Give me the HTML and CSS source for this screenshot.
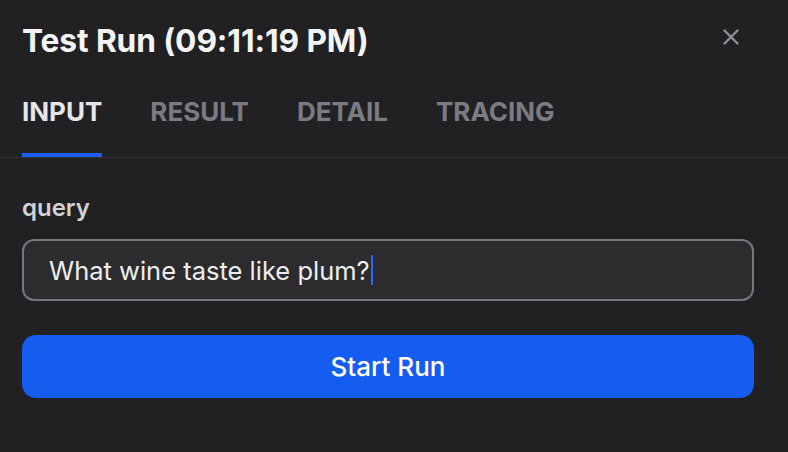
FILE: index.html
```html
<!DOCTYPE html>
<html lang="en">
<head>
<meta charset="utf-8">
<title>Test Run</title>
<link rel="stylesheet" href="styles.css">
</head>
<body>
<div class="panel">
  <header class="header">
    <h1 class="title">Test Run (09:11:19 PM)</h1>
    <button class="close" aria-label="Close">
      <svg width="18" height="18" viewBox="0 0 18 18"><path d="M2.5 2.5 L15.5 15.5 M15.5 2.5 L2.5 15.5" stroke="#8e8e96" stroke-width="2.4" stroke-linecap="round"/></svg>
    </button>
  </header>
  <nav class="tabs">
    <div class="tab active">INPUT</div>
    <div class="tab">RESULT</div>
    <div class="tab">DETAIL</div>
    <div class="tab">TRACING</div>
  </nav>
  <section class="content">
    <label class="label">query</label>
    <div class="input"><span class="value">What wine taste like plum?</span><span class="caret"></span></div>
    <button class="run">Start Run</button>
  </section>
</div>
</body>
</html>
```
FILE: styles.css
```css
html, body {
  margin: 0;
  padding: 0;
  background: #212123;
  width: 788px;
  height: 452px;
  overflow: hidden;
  font-family: Inter, "Noto Sans", sans-serif;
}
.panel {
  display: flex;
  flex-direction: column;
}
.header {
  height: 80px;
  display: flex;
  align-items: center;
  justify-content: space-between;
  padding: 0 48px 0 22px;
}
.title {
  margin: 0;
  font-size: 31.7px;
  font-weight: 700;
  color: #f4f4f6;
  letter-spacing: -0.1px;
}
.close {
  background: none;
  border: 0;
  padding: 0;
  width: 18px;
  height: 18px;
  display: flex;
  margin-top: -6px;
}
.tabs {
  display: flex;
  gap: 48px;
  padding: 0 22px;
  border-bottom: 1px solid #2f2f33;
  height: 77px;
}
.tab {
  font-size: 26px;
  font-weight: 700;
  color: #7b7b83;
  padding-top: 16px;
  box-sizing: border-box;
  height: 77px;
  border-bottom: 4px solid transparent;
}
.tab.active {
  color: #e6e6ea;
  border-bottom-color: #1a5df0;
}
.content {
  padding: 35px 34px 0 22px;
  display: flex;
  flex-direction: column;
}
.label {
  font-size: 24px;
  font-weight: 600;
  color: #d2d2d6;
  line-height: 30px;
}
.input {
  margin-top: 16px;
  height: 62px;
  box-sizing: border-box;
  border: 2px solid #77777f;
  border-radius: 12px;
  background: #2c2c2f;
  display: flex;
  align-items: center;
  padding-left: 25px;
}
.value {
  font-size: 25.5px;
  color: #eeeef0;
}
.caret {
  width: 2px;
  height: 30px;
  background: #1f6bff;
  margin-left: 1px;
}
.run {
  margin-top: 34px;
  height: 63px;
  border: 0;
  border-radius: 14px;
  background: #155cf0;
  color: #ffffff;
  font-family: Inter, "Noto Sans", sans-serif;
  font-size: 26px;
  font-weight: 500;
}
```
